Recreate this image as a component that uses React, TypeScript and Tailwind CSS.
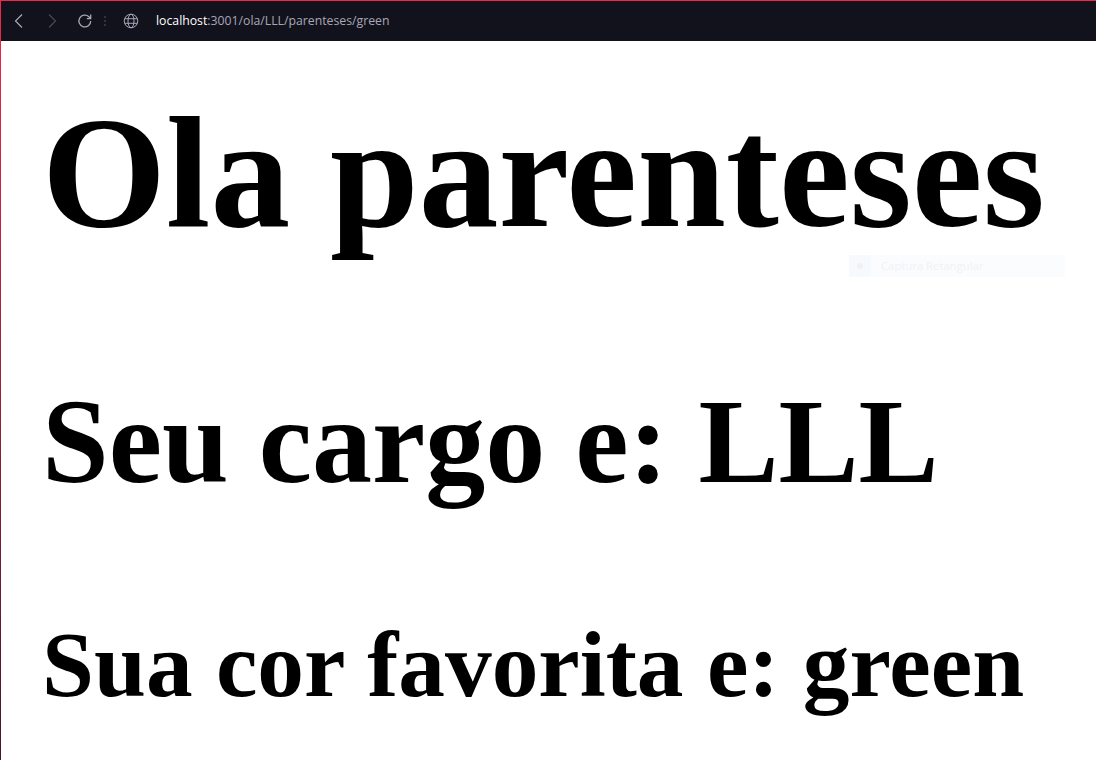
import React from "react";

export default function App() {
  return (
    <div className="relative h-[760px] w-[1096px] overflow-hidden bg-white border-t border-t-[#f4264a]">
      <div className="absolute left-0 top-0 h-full w-px bg-gradient-to-b from-[#f4264a] to-[#4a1528]" />
      <div className="flex h-[40px] items-center bg-[#12121c] text-[#a9a6b8]">
        <svg className="ml-[11px] h-4 w-4" viewBox="0 0 16 16" fill="none" stroke="#a9a6b8" strokeWidth="1.2"><path d="M11 1.5 L4.5 8 L11 14.5" /></svg>
        <svg className="ml-[17px] h-4 w-4" viewBox="0 0 16 16" fill="none" stroke="#4a4854" strokeWidth="1.2"><path d="M5 1.5 L11.5 8 L5 14.5" /></svg>
        <svg className="ml-[17px] h-4 w-4" viewBox="0 0 16 16" fill="none" stroke="#a9a6b8" strokeWidth="1.3"><path d="M13.7 8 A5.9 5.9 0 1 1 11.9 3.8 L13.7 5.6 M13.7 1.6 V5.6 H9.8" /></svg>
        <div className="ml-[11px] flex flex-col gap-[2px]">
          <span className="h-[2px] w-[2px] bg-[#33323d]" />
          <span className="h-[2px] w-[2px] bg-[#33323d]" />
          <span className="h-[2px] w-[2px] bg-[#33323d]" />
        </div>
        <svg className="ml-[17px] h-4 w-4" viewBox="0 0 16 16" fill="none" stroke="#a9a6b8" strokeWidth="1"><circle cx="8" cy="8" r="6.8" /><ellipse cx="8" cy="8" rx="3" ry="6.8" /><path d="M1.8 5.7 H14.2 M1.8 10.3 H14.2" /></svg>
        <div className="ml-[17px] font-['Open_Sans',sans-serif] text-[12.25px] whitespace-nowrap">
          <span className="text-white">localhost</span>:3001/ola/LLL/parenteses/green
        </div>
      </div>
      <div className="pl-[42px] font-['Liberation_Serif',serif] font-bold text-black">
        <h1 className="mt-[52px] text-[159.5px] leading-[160px]">Ola parenteses</h1>
        <h2 className="mt-[120px] text-[120px] leading-[138px]">Seu cargo e: LLL</h2>
        <h3 className="mt-[100px] text-[93.4px] leading-[108px]">Sua cor favorita e: green</h3>
      </div>
      <div className="absolute left-[849px] top-[254px] flex h-[22px] w-[216px] items-center bg-[#fbfcfe] font-['Open_Sans',sans-serif] text-[11.3px] text-[#f1f2f4]">
        <div className="flex h-[22px] w-[22px] items-center justify-center bg-[#f6fafe]"><span className="h-[6px] w-[6px] rounded-full bg-[#f4f0f0]" /></div>
        <span className="ml-[10px]">Captura Retangular</span>
      </div>
    </div>
  );
}
